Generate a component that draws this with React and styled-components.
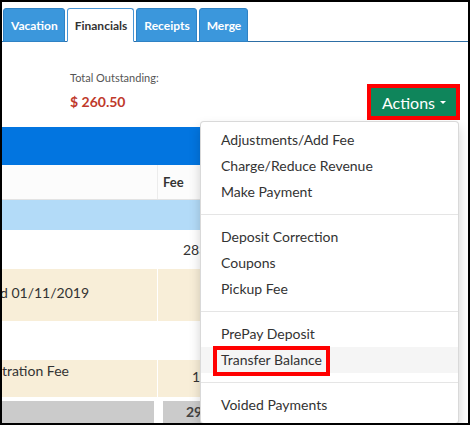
import React from "react";
import styled, { createGlobalStyle } from "styled-components";

const GlobalStyle = createGlobalStyle`
  body {
    margin: 0;
    font-family: Lato, "Open Sans", sans-serif;
    background: #fff;
  }
`;

const Frame = styled.div`
  position: relative;
  width: 470px;
  height: 425px;
  box-sizing: border-box;
  border: 2px solid #000;
  overflow: hidden;
  background: #fff;
  color: #333;
`;

const TabBar = styled.div`
  display: flex;
  gap: 2px;
  padding: 6px 0 0 1px;
  border-bottom: 1px solid #2d6ea5;
`;

const Tab = styled.div`
  height: 34px;
  box-sizing: border-box;
  margin-bottom: -1px;
  padding: 0 6px 0 7px;
  display: flex;
  align-items: center;
  font-size: 12px;
  font-weight: 700;
  border: 1px solid ${(p) => (p.$active ? "#4a95d4" : "#2f82c4")};
  border-bottom-color: ${(p) => (p.$active ? "#fff" : "#2f82c4")};
  border-radius: 3px 3px 0 0;
  background: ${(p) => (p.$active ? "#fff" : "#3b97dc")};
  color: ${(p) => (p.$active ? "#333" : "#fff")};
`;

const Summary = styled.div`
  height: 85px;
  box-sizing: border-box;
  padding: 0 8px 7px 68px;
  display: flex;
  justify-content: space-between;
  align-items: flex-end;
`;

const Outstanding = styled.div`
  display: flex;
  flex-direction: column;
  gap: 7px;
  margin-bottom: 8px;
`;

const OutstandingLabel = styled.div`
  font-size: 11px;
  line-height: 15px;
  color: #555;
`;

const OutstandingValue = styled.div`
  font-size: 14px;
  line-height: 20px;
  font-weight: 700;
  color: #c0392b;
`;

const Callout = styled.div`
  display: flex;
  border: 4px solid #f00;
`;

const ActionsButton = styled.button`
  height: 28px;
  padding: 0 10px 0 11px;
  display: flex;
  align-items: center;
  gap: 5px;
  border: none;
  background: #0f855b;
  color: #fff;
  font-family: Lato, sans-serif;
  font-size: 16px;
`;

const Caret = styled.span`
  width: 0;
  height: 0;
  border-top: 3px solid #fff;
  border-left: 3px solid transparent;
  border-right: 3px solid transparent;
`;

const Table = styled.div`
  margin-right: 12px;
  font-size: 14px;
`;

const TitleBar = styled.div`
  height: 38px;
  background: #0275e0;
`;

const Row = styled.div`
  display: grid;
  grid-template-columns: 156px 1fr;
  height: ${(p) => p.$h}px;
  box-sizing: border-box;
  background: ${(p) => p.$bg || "#fff"};
  border-bottom: ${(p) => (p.$line ? "1px solid #e3e3e3" : "none")};
`;

const Cell = styled.div`
  border-right: ${(p) => p.$divider || "none"};
  padding-left: ${(p) => p.$indent || 0}px;
  padding-top: ${(p) => p.$top || 0}px;
  margin-left: ${(p) => p.$shift || 0}px;
  line-height: 20px;
  white-space: nowrap;
  font-weight: ${(p) => (p.$bold ? 700 : 400)};
  font-size: ${(p) => (p.$small ? 13 : 14)}px;
  display: flex;
  align-items: ${(p) => (p.$middle ? "center" : "flex-start")};
`;

const TotalRow = styled.div`
  display: grid;
  grid-template-columns: 152px 1fr;
  column-gap: 9px;
  height: 26px;
  margin-top: 4px;
`;

const TotalCell = styled.div`
  background: #cbcbcb;
  padding: 1px 0 0 ${(p) => p.$indent || 0}px;
  line-height: 20px;
  font-weight: 700;
  color: #444;
`;

const Menu = styled.ul`
  position: absolute;
  top: 119px;
  left: 198px;
  width: 259px;
  box-sizing: border-box;
  margin: 0;
  padding: 5px 0;
  list-style: none;
  background: #fff;
  border: 1px solid rgba(0, 0, 0, 0.15);
  border-radius: 4px;
  box-shadow: 0 6px 12px rgba(0, 0, 0, 0.175);
`;

const MenuItem = styled.li`
  padding: 3px 20px;
  line-height: 20px;
  font-size: 14px;
  color: #333;
  white-space: nowrap;
  background: ${(p) => (p.$hover ? "#f5f5f5" : "transparent")};
`;

const Divider = styled.li`
  height: 1px;
  margin: 9px 0;
  background: #e5e5e5;
`;

const Marked = styled.span`
  position: relative;
  &::after {
    content: "";
    position: absolute;
    inset: -5px -8px -8px -8px;
    border: 4px solid #f00;
  }
`;

const menuGroups = [
  ["Adjustments/Add Fee", "Charge/Reduce Revenue", "Make Payment"],
  ["Deposit Correction", "Coupons", "Pickup Fee"],
  ["PrePay Deposit", "Transfer Balance"],
  ["Voided Payments"],
];

export default function App() {
  return (
    <>
      <GlobalStyle />
      <Frame>
        <TabBar>
          <Tab>Vacation</Tab>
          <Tab $active>Financials</Tab>
          <Tab>Receipts</Tab>
          <Tab>Merge</Tab>
        </TabBar>

        <Summary>
          <Outstanding>
            <OutstandingLabel>Total Outstanding:</OutstandingLabel>
            <OutstandingValue>$ 260.50</OutstandingValue>
          </Outstanding>
          <Callout>
            <ActionsButton>
              Actions
              <Caret />
            </ActionsButton>
          </Callout>
        </Summary>

        <Table>
          <TitleBar />
          <Row $h={35} $bg="#fcfcfc" $line>
            <Cell $divider="1px solid #ececec" />
            <Cell $indent={5} $bold $small $middle>Fee</Cell>
          </Row>
          <Row $h={30} $bg="#b3dbf8" />
          <Row $h={39}>
            <Cell />
            <Cell $indent={25} $middle>283.00</Cell>
          </Row>
          <Row $h={52} $bg="#f8eed8">
            <Cell $divider="1px solid #fff" $top={14} $shift={-2}>d 01/11/2019</Cell>
            <Cell />
          </Row>
          <Row $h={39} />
          <Row $h={37} $bg="#f8eed8">
            <Cell $divider="1px solid #fff" $top={1}>tration Fee</Cell>
            <Cell $indent={34} $top={7}>160.00</Cell>
          </Row>
          <TotalRow>
            <TotalCell />
            <TotalCell $indent={23}>295.00</TotalCell>
          </TotalRow>
        </Table>

        <Menu>
          {menuGroups.map((group, gi) => (
            <React.Fragment key={gi}>
              {gi > 0 && <Divider />}
              {group.map((label) =>
                label === "Transfer Balance" ? (
                  <MenuItem key={label} $hover>
                    <Marked>{label}</Marked>
                  </MenuItem>
                ) : (
                  <MenuItem key={label}>{label}</MenuItem>
                )
              )}
            </React.Fragment>
          ))}
        </Menu>
      </Frame>
    </>
  );
}
